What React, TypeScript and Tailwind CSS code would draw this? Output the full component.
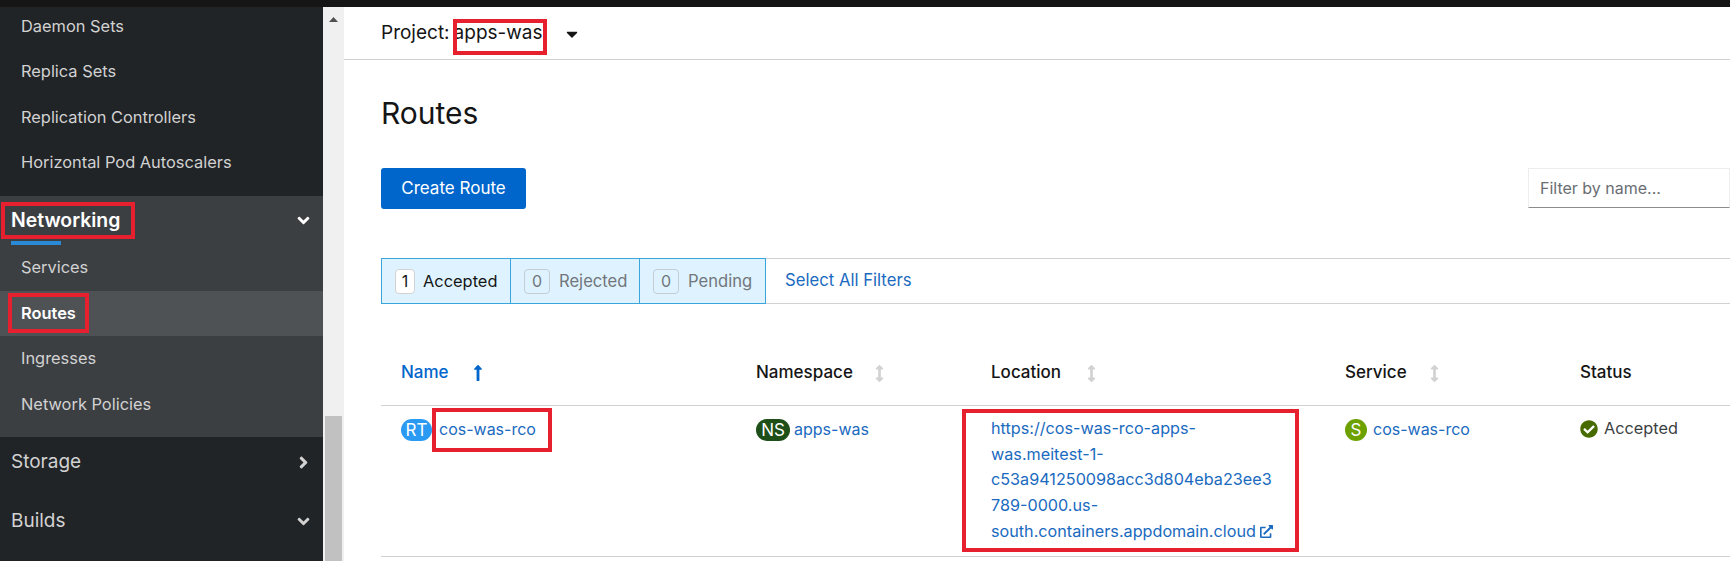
import React from 'react';
import {
  FaAngleDown,
  FaAngleRight,
  FaArrowsAltV,
  FaCaretDown,
  FaCheckCircle,
  FaExternalLinkAlt,
  FaLongArrowAltUp,
} from 'react-icons/fa';

const redBox = 'absolute border-[4px] border-[#e6202e] pointer-events-none';

const SideItem: React.FC<{ label: string; active?: boolean }> = ({ label, active }) => (
  <div
    className={`flex items-center h-[45.5px] pl-[21px] text-[16.4px] ${
      active ? 'bg-[#4f5255] text-white font-semibold' : 'text-[#d2d2d2]'
    }`}
  >
    {label}
  </div>
);

const Sidebar: React.FC = () => (
  <aside className="relative w-[323px] shrink-0 bg-[#212427] overflow-hidden">
    <div className="-mt-[3.5px]">
      <SideItem label="Daemon Sets" />
      <SideItem label="Replica Sets" />
      <SideItem label="Replication Controllers" />
      <SideItem label="Horizontal Pod Autoscalers" />
    </div>

    <div className="relative mt-[10.5px] bg-[#3c3f42] pb-[10px]">
      <div className="flex items-center justify-between h-[49px] pl-[11px] pr-[10px] text-[19.4px] font-semibold text-white">
        <span>Networking</span>
        <FaAngleDown size={19} />
      </div>
      <div className="absolute left-[11px] top-[45px] w-[50px] h-[4px] bg-[#2b8ad6]" />
      <SideItem label="Services" />
      <SideItem label="Routes" active />
      <SideItem label="Ingresses" />
      <SideItem label="Network Policies" />
      <div className={`${redBox} left-[1px] top-[6px] w-[134px] h-[37px]`} />
      <div className={`${redBox} left-[8px] top-[97px] w-[81px] h-[40px]`} />
    </div>

    <div className="flex items-center justify-between h-[51px] pl-[11px] pr-[10px] text-[19px] text-[#d2d2d2]">
      <span>Storage</span>
      <FaAngleRight size={19} />
    </div>
    <div className="flex items-center justify-between mt-[4px] h-[58px] pl-[11px] pr-[10px] text-[19px] text-[#d2d2d2]">
      <span>Builds</span>
      <FaAngleDown size={19} />
    </div>
  </aside>
);

const Scrollbar: React.FC = () => (
  <div className="flex flex-col justify-between w-[21px] shrink-0 bg-[#f0f0f0]">
    <svg width="21" height="20" viewBox="0 0 21 20" className="mt-[4px]">
      <path d="M6 11 L10.5 6 L15 11 Z" fill="#505050" />
    </svg>
    <div className="ml-[2px] w-[17px] h-[145px] bg-[#c1c1c1]" />
  </div>
);

const FilterChip: React.FC<{ count: number; label: string; on?: boolean; width: string }> = ({ count, label, on, width }) => (
  <div
    className={`flex items-center h-full pl-[13px] bg-[#def3ff] border border-[#39a5dc] -ml-px first:ml-0 ${width} ${
      on ? 'text-[#151515]' : 'text-[#72767b]'
    }`}
  >
    <span
      className={`flex items-center justify-center h-[25px] rounded-[4px] border text-[16px] ${
        on ? 'w-[20px] bg-white border-[#d2d2d2] mr-[8px]' : 'w-[26px] border-[#c4cdd2] mr-[9px]'
      }`}
    >
      {count}
    </span>
    <span className={on ? 'text-[16.4px]' : 'text-[16.6px]'}>{label}</span>
  </div>
);

const SortHead: React.FC<{ label: string; gap: string }> = ({ label, gap }) => (
  <div className="flex items-center font-medium text-[#151515] text-[17px]">
    <span>{label}</span>
    <FaArrowsAltV size={17} className={`text-[#d2d2d2] ${gap}`} />
  </div>
);

const Badge: React.FC<{ text: string; color: string; width: string }> = ({ text, color, width }) => (
  <span
    className={`flex items-center justify-center h-[22px] rounded-full text-white text-[17px] shrink-0 ${color} ${width}`}
  >
    {text}
  </span>
);

const Main: React.FC = () => (
  <main className="relative flex-1 min-w-0 bg-white overflow-hidden">
    <div className="flex items-center h-[53px] pl-[37px] pt-[1px] border-b border-[#d2d2d2] text-[19px] text-[#151515]">
      <span>Project:</span>
      <span className="ml-[4px]">apps-was</span>
      <FaCaretDown size={18} className="ml-[20px]" />
    </div>
    <div className={`${redBox} left-[109px] top-[12px] w-[94px] h-[36px]`} />

    <div className="pl-[37px]">
      <h1 className="mt-[31px] h-[44px] leading-[44px] text-[30px] text-[#151515]">Routes</h1>

      <div className="flex items-start justify-between mt-[33px]">
        <button className="w-[145px] h-[41px] rounded-[3px] bg-[#0066cc] text-white text-[17px]">Create Route</button>
        <div className="flex items-center w-[202px] h-[40px] pl-[11px] border border-[#ededed] border-b-[#8a8d90] text-[16px] text-[#6a6e73]">
          Filter by name...
        </div>
      </div>

      <div className="flex items-center h-[46px] mt-[49px] border-y border-[#d2d2d2]">
        <div className="flex h-[46px] -my-px">
          <FilterChip count={1} label="Accepted" on width="w-[130px]" />
          <FilterChip count={0} label="Rejected" width="w-[130px]" />
          <FilterChip count={0} label="Pending" width="w-[127px]" />
        </div>
        <a className="ml-[19px] text-[16.7px] text-[#1a6ac0]">Select All Filters</a>
      </div>

      <div className="grid grid-cols-[375px_235px_354px_235px_1fr] mt-[40px]">
        <div className="flex items-center h-[62px] pl-[20px] pb-[3px] border-b border-[#d2d2d2] text-[17px] font-medium text-[#0066cc]">
          <span>Name</span>
          <FaLongArrowAltUp size={18} className="ml-[20px]" />
        </div>
        <div className="flex items-center pb-[3px] border-b border-[#d2d2d2]">
          <SortHead label="Namespace" gap="ml-[18px]" />
        </div>
        <div className="flex items-center pb-[3px] border-b border-[#d2d2d2]">
          <SortHead label="Location" gap="ml-[22px]" />
        </div>
        <div className="flex items-center pb-[3px] border-b border-[#d2d2d2]">
          <SortHead label="Service" gap="ml-[19px]" />
        </div>
        <div className="flex items-center pb-[3px] border-b border-[#d2d2d2] font-medium text-[17px] text-[#151515]">
          Status
        </div>

        <div className="flex items-start h-[151px] pl-[20px] pt-[13px] gap-[7px] border-b border-[#d2d2d2] text-[16px] text-[#1a6ac0] leading-[21px]">
          <Badge text="RT" color="bg-[#2b9af3]" width="w-[31px]" />
          <span>cos-was-rco</span>
        </div>
        <div className="flex items-start pt-[13px] gap-[4px] border-b border-[#d2d2d2] text-[16px] text-[#1a6ac0] leading-[21px]">
          <Badge text="NS" color="bg-[#1e4f18]" width="w-[34px]" />
          <span>apps-was</span>
        </div>
        <div className="pt-[10px] border-b border-[#d2d2d2] text-[16.2px] text-[#1a6ac0] leading-[25.7px]">
          <span className="block">https://cos-was-rco-apps-</span>
          <span className="block">was.meitest-1-</span>
          <span className="block">c53a941250098acc3d804eba23ee3</span>
          <span className="block">789-0000.us-</span>
          <span className="flex items-center">
            south.containers.appdomain.cloud
            <FaExternalLinkAlt size={13} className="ml-[4px]" />
          </span>
        </div>
        <div className="flex items-start pt-[13px] gap-[6px] border-b border-[#d2d2d2] text-[16px] text-[#1a6ac0] leading-[21px]">
          <Badge text="S" color="bg-[#6ca100]" width="w-[22px]" />
          <span>cos-was-rco</span>
        </div>
        <div className="flex items-start pt-[12px] gap-[6px] border-b border-[#d2d2d2] text-[16.3px] text-[#3c3f42] leading-[21px]">
          <FaCheckCircle size={18} className="text-[#486b00] mt-[2px]" />
          <span>Accepted</span>
        </div>
      </div>

      <div className={`${redBox} left-[88px] top-[401px] w-[120px] h-[44px]`} />
      <div className={`${redBox} left-[618px] top-[402px] w-[337px] h-[143px]`} />
    </div>
  </main>
);

export default function App() {
  return (
    <div className="flex flex-col w-[1730px] h-[561px] overflow-hidden bg-white font-['Inter','Liberation_Sans',sans-serif]">
      <div className="h-[7px] shrink-0 bg-[#151515]" />
      <div className="flex flex-1 min-h-0">
        <Sidebar />
        <Scrollbar />
        <Main />
      </div>
    </div>
  );
}
